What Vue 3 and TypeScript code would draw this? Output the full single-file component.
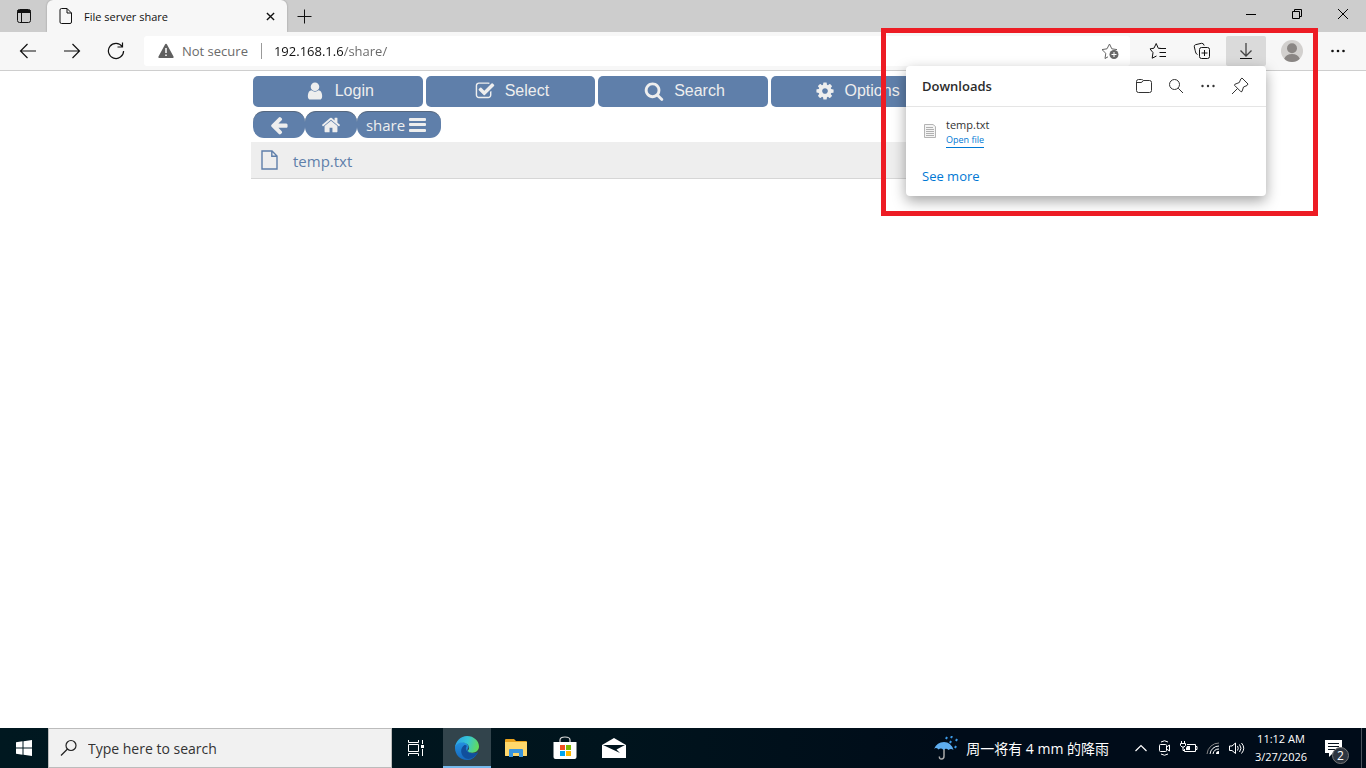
<script setup lang="ts">
import { ref } from 'vue'

const address = ref('192.168.1.6/share/')
const query = ref('')

const actions: { label: string; path: string }[] = [
  {
    label: 'Login',
    path: 'M1536 1399q0 109-62.5 187t-150.5 78h-854q-88 0-150.5-78t-62.5-187q0-85 8.5-160.5t31.5-152 58.5-131 94-89 134.5-34.5q131 128 313 128t313-128q76 0 134.5 34.5t94 89 58.5 131 31.5 152 8.5 160.5zm-256-887q0 159-112.5 271.5t-271.5 112.5-271.5-112.5-112.5-271.5 112.5-271.5 271.5-112.5 271.5 112.5 112.5 271.5z',
  },
  {
    label: 'Select',
    path: 'M1472 930v318q0 119-84.5 203.5t-203.5 84.5h-832q-119 0-203.5-84.5t-84.5-203.5v-832q0-119 84.5-203.5t203.5-84.5h832q63 0 117 25 15 7 18 23 3 17-9 29l-49 49q-10 10-23 10-3 0-9-2-23-6-45-6h-832q-66 0-113 47t-47 113v832q0 66 47 113t113 47h832q66 0 113-47t47-113v-254q0-13 9-22l64-64q10-10 23-10 6 0 12 3 20 8 20 29zm231-489l-814 814q-24 24-57 24t-57-24l-430-430q-24-24-24-57t24-57l110-110q24-24 57-24t57 24l263 263 647-647q24-24 57-24t57 24l110 110q24 24 24 57t-24 57z',
  },
  {
    label: 'Search',
    path: 'M1216 832q0-185-131.5-316.5t-316.5-131.5-316.5 131.5-131.5 316.5 131.5 316.5 316.5 131.5 316.5-131.5 131.5-316.5zm512 832q0 52-38 90t-90 38q-54 0-90-38l-343-342q-179 124-399 124-143 0-273.5-55.5t-225-150-150-225-55.5-273.5 55.5-273.5 150-225 225-150 273.5-55.5 273.5 55.5 225 150 150 225 55.5 273.5q0 220-124 399l343 343q37 37 37 90z',
  },
  {
    label: 'Options',
    path: 'M1152 896q0-106-75-181t-181-75-181 75-75 181 75 181 181 75 181-75 75-181zm512-109v222q0 12-8 23t-20 13l-185 28q-19 54-39 91 35 50 107 138 10 12 10 25t-9 23q-27 37-99 108t-94 71q-12 0-26-9l-138-108q-44 23-91 38-16 136-29 186-7 28-36 28h-222q-14 0-24.5-8.5t-11.5-21.5l-28-184q-49-16-90-37l-141 107q-10 9-25 9-14 0-25-11-126-114-165-168-7-10-7-23 0-12 8-23 15-21 51-66.5t54-70.5q-27-50-41-99l-183-27q-13-2-21-12.5t-8-23.5v-222q0-12 8-23t19-13l186-28q14-46 39-92-40-57-107-138-10-12-10-24 0-10 9-23 26-36 98.5-107.5t94.5-71.5q13 0 26 10l138 107q44-23 91-38 16-136 29-186 7-28 36-28h222q14 0 24.5 8.5t11.5 21.5l28 184q49 16 90 37l142-107q9-9 24-9 13 0 25 10 129 119 165 170 7 8 7 22 0 12-8 23-15 21-51 66.5t-54 70.5q26 50 41 98l183 28q13 2 21 12.5t8 23.5z',
  },
]
</script>

<template>
  <div class="desktop">
    <header class="titlebar">
      <button class="tab-actions" aria-label="Tab actions">
        <svg width="16" height="16" viewBox="0 0 16 16" fill="none" stroke="#111">
          <rect x="1.5" y="1.5" width="13" height="13" rx="2" />
          <path d="M1.5 2.5h13M1.5 3.5h13M1.5 4.5h13M5.5 5v9.5" />
        </svg>
      </button>
      <div class="tab">
        <svg width="14" height="16" viewBox="0 0 14 16" fill="none" stroke="#111">
          <path d="M2.5 .5H8L12.5 5V14a1.5 1.5 0 0 1-1.5 1.5H2.5A1.5 1.5 0 0 1 1 14V2A1.500 1.500 0 0 1 2.500 .5zM8 .5V5h4.500" />
        </svg>
        <span class="tab-title">File server share</span>
        <button class="tab-close" aria-label="Close tab">
          <svg width="9" height="9" viewBox="0 0 10 10" stroke="#111" stroke-width="1.500"><path d="M1 1l8 8M9 1L1 9" /></svg>
        </button>
      </div>
      <button class="new-tab" aria-label="New tab">
        <svg width="15" height="15" viewBox="0 0 15 15" stroke="#111"><path d="M7.500 .5v14M.5 7.500h14" /></svg>
      </button>
      <div class="window-controls">
        <button aria-label="Minimize">
          <svg width="10" height="10" viewBox="0 0 10 10" stroke="#000"><path d="M0 5.500h10" /></svg>
        </button>
        <button aria-label="Restore">
          <svg width="10" height="10" viewBox="0 0 10 10" fill="none" stroke="#000"><path d="M.5 2.500h7v7h-7zM2.500 2.500v-2h7v7h-2" /></svg>
        </button>
        <button aria-label="Close">
          <svg width="10" height="10" viewBox="0 0 10 10" stroke="#000"><path d="M0 0l10 10M10 0L0 10" /></svg>
        </button>
      </div>
    </header>

    <nav class="toolbar">
      <button class="tool" aria-label="Back">
        <svg width="18" height="16" viewBox="0 0 18 16" fill="none" stroke="#111" stroke-width="1.200"><path d="M17 8H1.500M8.500 1L1.500 8l7 7" /></svg>
      </button>
      <button class="tool" aria-label="Forward">
        <svg width="18" height="16" viewBox="0 0 18 16" fill="none" stroke="#111" stroke-width="1.200"><path d="M1 8h15.500M9.500 1l7 7-7 7" /></svg>
      </button>
      <button class="tool" aria-label="Refresh">
        <svg width="18" height="18" viewBox="0 0 18 18" fill="none" stroke="#111" stroke-width="1.200"><path d="M15.200 4.500A7.600 7.600 0 1 0 16.600 9M15.500 .5v4.500h-5" /></svg>
      </button>
      <div class="address">
        <svg width="16" height="16" viewBox="0 0 16 16"><path d="M8 .8q.7 0 1 .6l6.500 12q.6 1.600-.8 1.600H1.300q-1.400 0-.8-1.600l6.500-12q.3-.6 1-.6z" fill="#5f5f5f" /><path d="M8 5v5M8 11.500v1.500" stroke="#fff" stroke-width="1.500" /></svg>
        <span class="not-secure">Not secure</span>
        <span class="divider"></span>
        <input v-model="address" aria-label="Address" spellcheck="false" />
        <button class="add-favorite" aria-label="Add to favorites">
          <svg width="18" height="18" viewBox="0 0 18 18" fill="none" stroke="#666">
            <path d="M7 14.800L4 16.500l.8-5.200L1 7.600l5-.8L8.500 2l2.300 4.800 5.200.8" />
            <circle cx="13" cy="12.500" r="4.500" fill="#666" stroke="none" />
            <path d="M13 10v5M10.500 12.500h5" stroke="#fff" />
          </svg>
        </button>
      </div>
      <button class="tool" aria-label="Favorites">
        <svg width="18" height="18" viewBox="0 0 18 18" fill="none" stroke="#111" stroke-linejoin="round">
          <path d="M11.500 6.300H9.300L7.200 1.500 5 6.200l-4 .7 3 3.700-.8 5.600 4.300-2.200M10.500 6.500H17M10.500 10.500H17M10.500 14.500H17" />
        </svg>
      </button>
      <button class="tool" aria-label="Collections">
        <svg width="18" height="18" viewBox="0 0 18 18" fill="none" stroke="#111">
          <path d="M4.500 12.500C3 12 2.600 10.500 2.200 8.500L1.300 4.800Q1 3.200 2.500 2.700L8.500 1.300Q10.500 1 11.200 3.500" />
          <rect x="6.500" y="5.500" width="10" height="11" rx="2" />
          <path d="M11.500 8v6M8.500 11h6" />
        </svg>
      </button>
      <div class="downloads">
        <button class="tool active" aria-label="Downloads" aria-expanded="true">
          <svg width="14" height="16" viewBox="0 0 14 16" fill="none"><path d="M7 0v12.500M1.500 7.500L7 13l5.500-5.500" stroke="#444" stroke-width="1.300" /><path d="M1 15.500h12" stroke="#111" /></svg>
        </button>
        <section class="popup" aria-label="Downloads">
          <div class="popup-head">
            <h2>Downloads</h2>
            <button aria-label="Open downloads folder">
              <svg width="18" height="16" viewBox="0 0 18 16" fill="none" stroke="#333"><path d="M1.500 12.500v-9q0-2 2-2h3q1 0 2 1h6q2 0 2 2v8q0 2-2 2h-11q-2 0-2-2zM1.500 4.500h4.500q1 0 2.500-2" /></svg>
            </button>
            <button aria-label="Search downloads">
              <svg width="16" height="16" viewBox="0 0 16 16" fill="none" stroke="#333"><circle cx="6.500" cy="6.500" r="5" /><path d="M10.200 10.200L15 15" /></svg>
            </button>
            <button aria-label="More options">
              <svg width="16" height="16" viewBox="0 0 16 16" fill="#333"><circle cx="2.500" cy="8" r="1.200" /><circle cx="8" cy="8" r="1.200" /><circle cx="13.500" cy="8" r="1.200" /></svg>
            </button>
            <button aria-label="Pin downloads">
              <svg width="18" height="18" viewBox="0 0 18 18" fill="none" stroke="#333" stroke-linejoin="round"><path d="M11 1l6 6-1 1.500-3.500 1.500-1.500 4.500-1 .3L3.500 8.300l.3-1L8.300 5.500 9.800 2zM6.500 11.500L1 17" /></svg>
            </button>
          </div>
          <div class="download-item">
            <svg width="12" height="14" viewBox="0 0 12 14"><path d="M.5 .5H9l2.500 2v11H.5z" fill="#f4f4f4" stroke="#b4b4b4" /><path d="M2 3.500h7M2 5.500h8M2 7.500h8M2 9.500h8M2 11.500h8" stroke="#b0b0b0" /></svg>
            <div class="download-text">
              <span>temp.txt</span>
              <a href="#">Open file</a>
            </div>
          </div>
          <a class="see-more" href="#">See more</a>
        </section>
        <div class="highlight"></div>
      </div>
      <button class="tool profile" aria-label="Profile">
        <svg width="22" height="22" viewBox="0 0 22 22">
          <circle cx="11" cy="11" r="11" fill="#d2d0ce" />
          <circle cx="11" cy="8.200" r="5" fill="#8a8684" />
          <path d="M3.200 18.700Q5 14 11 14t7.800 4.700Q15.500 22 11 22t-7.800-3.300z" fill="#8a8684" />
        </svg>
      </button>
      <button class="tool settings" aria-label="Settings and more">
        <svg width="16" height="16" viewBox="0 0 16 16" fill="#111"><circle cx="2.500" cy="8" r="1.300" /><circle cx="8" cy="8" r="1.300" /><circle cx="13.500" cy="8" r="1.300" /></svg>
      </button>
    </nav>

    <main class="page">
      <div class="content">
        <div class="actions">
          <button v-for="a in actions" :key="a.label">
            <svg width="20" height="20" viewBox="0 0 1792 1792" fill="#eee"><path :d="a.path" /></svg>
            <span>{{ a.label }}</span>
          </button>
        </div>
        <div class="crumbs">
          <button aria-label="Parent folder">
            <svg width="20" height="20" viewBox="0 0 1792 1792" fill="#eee"><path d="M1664 896v128q0 53-32.500 90.500t-84.500 37.500h-704l293 294q38 36 38 90t-38 90l-75 76q-37 37-90 37-52 0-91-37l-651-652q-37-37-37-90 0-52 37-91l651-650q38-38 91-38 52 0 90 38l75 74q38 38 38 91t-38 91l-293 293h704q52 0 84.500 37.500t32.500 90.500z" /></svg>
          </button>
          <button aria-label="Home">
            <svg width="20" height="20" viewBox="0 0 1792 1792" fill="#eee"><path d="M1472 992v480q0 26-19 45t-45 19h-384v-384h-256v384h-384q-26 0-45-19t-19-45v-480q0-1 .5-3t.5-3l575-474 575 474q1 2 1 6zm223-69l-62 74q-8 9-21 11h-3q-13 0-21-7l-692-577-692 577q-12 8-24 7-13-2-21-11l-62-74q-8-10-7-23.500t11-21.500l719-599q32-26 76-26t76 26l244 204v-195q0-14 9-23t23-9h192q14 0 23 9t9 23v408l219 182q10 8 11 21.500t-7 23.500z" /></svg>
          </button>
          <button class="folder">
            <span>share</span>
            <svg width="17" height="14" viewBox="0 0 17 14" fill="#eee"><rect width="17" height="3" rx="1" /><rect y="5" width="17" height="3" rx="1" /><rect y="11" width="17" height="3" rx="1" /></svg>
          </button>
        </div>
        <div class="file-row">
          <svg width="17" height="20" viewBox="0 0 17 20" fill="none" stroke="#5f7faa" stroke-width="1.400"><path d="M1 1h10l5 5v13H1zM10.800 1v5.200H16" /></svg>
          <a href="#">temp.txt</a>
        </div>
      </div>
    </main>

    <footer class="taskbar">
      <button class="start" aria-label="Start">
        <svg width="16" height="16" viewBox="0 0 16 16" fill="#fff"><path d="M0 2.200L6.500 1.300V7.500H0zM7.500 1.200L16 0v7.500H7.500zM0 8.500h6.500v6.200L0 13.800zM7.500 8.500H16V16l-8.500-1.200z" /></svg>
      </button>
      <label class="search">
        <svg width="18" height="18" viewBox="0 0 18 18" fill="none" stroke="#222" stroke-width="1.200"><circle cx="11" cy="6.500" r="5" /><path d="M7.500 10L1 16.500" /></svg>
        <input v-model="query" placeholder="Type here to search" aria-label="Search" />
      </label>
      <button class="task-view" aria-label="Task View">
        <svg width="18" height="16" viewBox="0 0 18 16" fill="none" stroke="#fff"><path d="M1.500 0v2.500h10V0M1.500 4.500h10v7h-10zM1.500 16v-2.500h10V16M15.500 0v4M15.500 9v7" /><path d="M14 5h3v3h-3z" fill="#fff" stroke="none" /></svg>
      </button>
      <div class="apps">
        <button class="running" aria-label="Microsoft Edge">
          <svg width="24" height="24" viewBox="0 0 24 24">
            <defs>
              <linearGradient id="edge-top" x1="0" y1="0.3" x2="1" y2="0.5"><stop offset="0" stop-color="#2b9fe6" /><stop offset=".5" stop-color="#35c6d6" /><stop offset="1" stop-color="#63dc58" /></linearGradient>
              <linearGradient id="edge-side" x1="0" y1="0" x2="0" y2="1"><stop offset="0" stop-color="#2391e0" /><stop offset="1" stop-color="#1668bd" /></linearGradient>
            </defs>
            <path d="M0 12C0 7 4 5.500 7.500 6c4 .5 6.500 3.500 6 5.500-1.300 1.600-1.500 3-.2 4.200 2.500 2.200 6.700 2.300 9.400.7Q19 24 12 24C5 24 0 18.500 0 12z" fill="url(#edge-side)" />
            <path d="M9.500 9c-4 2.500-4.500 8-1 11.800 4.300 4.500 11 1.200 14-3.200.5-.9 0-1.200-.6-.9-3.200 1.300-7 .9-9.500-1.200-2-1.700-1.800-3.800-.6-5.500-.5-.9-1.300-1.200-2.300-1z" fill="#114f9c" />
            <path d="M0 12C.4 5 5.600 0 12 0c7 0 12 5 12 10.600 0 3.700-3 6.200-6.800 6.200-2.600 0-4.300-1-4.300-2 0-.8 1.200-1 1.200-3 0-3-3.200-5.300-6.700-5.300C3.600 6.500.5 8.500 0 12z" fill="url(#edge-top)" />
          </svg>
        </button>
        <button aria-label="File Explorer">
          <svg width="22" height="20" viewBox="0 0 22 20"><path d="M0 2q0-1 1-1h8l2 2h10q1 0 1 1v14H0z" fill="#e9a21c" /><path d="M0 4h22v13q0 1-1 1H1q-1 0-1-1z" fill="#ffd86b" /><path d="M4 19v-7q0-1 1-1h12q1 0 1 1v7h-4v-4H8v4z" fill="#3a95dc" /></svg>
        </button>
        <button aria-label="Microsoft Store">
          <svg width="24" height="24" viewBox="0 0 24 24"><path d="M7 7V4q0-3 5-3t5 3v3" fill="none" stroke="#ddd" stroke-width="1.200" /><path d="M.5 6h23v15q0 2-2 2h-19q-2 0-2-2z" fill="#fff" /><path d="M7 9h5v5H7z" fill="#f25022" /><path d="M13 9h5v5h-5z" fill="#7fba00" /><path d="M7 15h5v5H7z" fill="#00a4ef" /><path d="M13 15h5v5h-5z" fill="#ffb900" /></svg>
        </button>
        <button aria-label="Mail">
          <svg width="24" height="20" viewBox="0 0 24 20"><path d="M0 7L12 0l12 7v13H0z" fill="#fff" /><path d="M1 7h22l-8.500 4.500L18 15 1 7z" fill="#00151e" /></svg>
        </button>
      </div>
      <div class="tray">
        <button class="weather">
          <svg width="24" height="24" viewBox="0 0 24 24" fill="none">
            <path d="M10 8v12q0 3-2.500 3T5.500 20.500" stroke="#a9a9a9" stroke-width="1.500" />
            <path d="M0 13Q3 6 10 6t9.500 8Q17 12 14.500 14 12 11.500 9.500 14 7 11.500 4.500 13.500 2 11 0 13z" fill="#5eaef0" />
            <path d="M13 1l-1 2M18 0l-1 2M23 3l-1 2M17 5l-1 2M22 10l-1 2" stroke="#3c9be8" stroke-width="2" />
          </svg>
          <span>周一将有 4 mm 的降雨</span>
        </button>
        <div class="tray-icons">
          <button aria-label="Show hidden icons"><svg width="14" height="16" viewBox="0 0 14 16" fill="none" stroke="#fff" stroke-width="1.200"><path d="M1.500 11L7 5.500l5.500 5.500" /></svg></button>
          <button aria-label="Meet Now"><svg width="14" height="16" viewBox="0 0 14 16" fill="none" stroke="#fff"><rect x="1.500" y="4.500" width="7" height="7" rx="1" /><path d="M8.500 7l3-2v6l-3-2M3 2Q6.500-.5 10 2M3 14q3.500 2.500 7 0" /></svg></button>
          <button aria-label="Battery"><svg width="18" height="16" viewBox="0 0 18 16" fill="none" stroke="#fff"><path d="M7 4.500h8.500v7H4.500V9M15.500 6.500h1.500v3h-1.500M1.500 1v2M4.500 1v2M.5 3.500h5v2l-1.500 1.500H2L.5 5.500zM3 7v3.500h1.500" /><path d="M7 6h3v4H6V8z" fill="#fff" stroke="none" /></svg></button>
          <button aria-label="Network"><svg width="14" height="16" viewBox="0 0 14 16" fill="none"><path d="M1 14A12 12 0 0 1 13 3" stroke="#888" /><path d="M4 14A9 9 0 0 1 13 6M7 14a6 6 0 0 1 6-5" stroke="#fff" /><path d="M10 14a3 3 0 0 1 3-3v3z" fill="#fff" /></svg></button>
          <button aria-label="Volume"><svg width="18" height="16" viewBox="0 0 18 16" fill="none" stroke="#fff"><path d="M1.500 6H4l3.500-3v10.500L4 10.500H1.500zM9.500 6q1.500 2.200 0 4.500M11.500 4.500q3 3.700 0 7.500M13.500 3q4.500 5.200 0 10.500" /></svg></button>
        </div>
        <button class="clock"><span>11:12 AM</span><span>3/27/2026</span></button>
        <button class="notifications" aria-label="Notifications">
          <svg width="17" height="17" viewBox="0 0 17 17"><path d="M0 0h17v13H8l-4 4v-4H0z" fill="#fff" /><path d="M3 3.500h11M3 6.500h11M3 9.500h7" stroke="#04101c" /></svg>
          <span class="badge">2</span>
        </button>
      </div>
    </footer>
  </div>
</template>

<style>
html,
body {
  margin: 0;
  background: #fff;
}
</style>

<style scoped>
.desktop {
  display: flex;
  flex-direction: column;
  min-height: 100vh;
  overflow: hidden;
  font-family: 'Open Sans', 'Noto Sans', 'Noto Sans CJK SC', sans-serif;
  font-size: 13px;
  color: #111;
}
button {
  display: flex;
  align-items: center;
  justify-content: center;
  padding: 0;
  border: 0;
  background: none;
  color: inherit;
  font: inherit;
}
svg {
  flex: none;
}
a {
  text-decoration: none;
}
.titlebar {
  display: flex;
  height: 32px;
  background: #cdcdcd;
}
.tab-actions {
  width: 47px;
}
.tab {
  display: flex;
  align-items: center;
  flex: 0 1 240px;
  box-sizing: border-box;
  padding: 0 12px;
  border-radius: 6px 6px 0 0;
  background: #f7f7f7;
  box-shadow: 0 0 2px rgba(0, 0, 0, 0.3);
}
.tab-title {
  flex: 1;
  margin-left: 11px;
  font-size: 11px;
}
.new-tab {
  width: 34px;
}
.window-controls {
  display: flex;
  margin-left: auto;
}
.window-controls button {
  width: 46px;
  height: 28px;
}
.toolbar {
  position: relative;
  z-index: 1;
  display: flex;
  align-items: center;
  gap: 4px;
  height: 38px;
  padding: 0 8px;
  border-bottom: 1px solid #cecece;
  background: #f7f7f7;
}
.tool {
  flex: none;
  width: 40px;
  height: 30px;
  border-radius: 2px;
}
.active {
  background: #dadada;
}
.profile,
.settings {
  margin-left: 2px;
}
.address {
  display: flex;
  align-items: center;
  flex: 1;
  height: 30px;
  margin: 0 4px;
  padding: 0 11px 0 14px;
  border-radius: 3px;
  background: #fff;
}
.not-secure {
  margin-left: 8px;
  color: #6a6a6a;
}
.divider {
  width: 1px;
  height: 16px;
  margin: 0 12px 0 13px;
  background: #9a9a9a;
}
.address input {
  flex: 1;
  min-width: 0;
  padding: 0;
  border: 0;
  outline: 0;
  background: linear-gradient(90deg, #111 69px, #666 69px);
  background-clip: text;
  -webkit-background-clip: text;
  color: transparent;
  font: inherit;
}
.downloads {
  position: relative;
}
.popup {
  position: absolute;
  top: 30px;
  right: 0;
  width: 360px;
  height: 130px;
  border-radius: 4px;
  background: #fff;
  box-shadow: 0 5px 14px rgba(0, 0, 0, 0.36);
}
.popup-head {
  display: flex;
  align-items: center;
  height: 40px;
  padding: 0 10px 0 16px;
  border-bottom: 1px solid #e5e5e5;
}
.popup-head h2 {
  flex: 1;
  margin: 0;
  font-size: 13px;
  font-weight: 600;
  color: #2b2b2b;
}
.popup-head button {
  width: 32px;
  height: 32px;
}
.download-item {
  display: flex;
  gap: 10px;
  padding: 10px 16px 0 18px;
}
.download-item svg {
  margin-top: 7px;
}
.download-text {
  display: flex;
  flex-direction: column;
  align-items: flex-start;
  font-size: 11px;
  line-height: 15px;
  color: #333;
}
.download-text a {
  border-bottom: 1px solid #0078d4;
  color: #0078d4;
  font-size: 9px;
}
.see-more {
  display: block;
  margin: 18px 16px 0;
  color: #0078d4;
  line-height: 20px;
}
.highlight {
  position: absolute;
  top: -8px;
  right: -52px;
  box-sizing: border-box;
  width: 437px;
  height: 188px;
  border: 5px solid #ed1c24;
  pointer-events: none;
}
.page {
  flex: 1;
}
.content {
  max-width: 864px;
  margin: 0 auto;
}
.actions {
  display: grid;
  grid-template-columns: repeat(5, 1fr);
  gap: 3px;
  padding: 5px 2px 0;
}
.actions button {
  gap: 10px;
  height: 31px;
  padding: 0 0 2px 3px;
  border-radius: 5px;
  background: #5f7faa;
  color: #eee;
  font-family: 'Liberation Sans', Arial, sans-serif;
  font-size: 16px;
}
.crumbs {
  display: flex;
  margin: 4px 2px;
}
.crumbs button {
  width: 52px;
  height: 27px;
  border-top: 1px solid #55677f;
  border-radius: 11px;
  background: #5f7faa;
  color: #eee;
}
.crumbs .folder {
  gap: 4px;
  width: 84px;
  padding-right: 6px;
  font-size: 15px;
}
.file-row {
  display: flex;
  align-items: center;
  gap: 15px;
  height: 36px;
  padding: 0 10px;
  border-bottom: 1px solid #d6d6d6;
  background: #eee;
}
.file-row a {
  padding-top: 2px;
  color: #5f7faa;
  font-size: 15px;
}
.taskbar {
  display: flex;
  height: 40px;
  background: linear-gradient(90deg, #001820, #00141d 45%, #000c19 70%, #000c19);
  color: #fff;
}
.start {
  width: 48px;
}
.search {
  display: flex;
  align-items: center;
  flex: 0 1 344px;
  box-sizing: border-box;
  gap: 10px;
  padding: 0 11px;
  border: 1px solid #bcbcbc;
  background: #f1f1f1;
}
.search input {
  flex: 1;
  min-width: 0;
  padding: 0;
  border: 0;
  outline: 0;
  background: none;
  font: inherit;
  font-size: 14px;
}
.search input::placeholder {
  color: #333;
}
.task-view {
  width: 48px;
  margin-right: 3px;
}
.apps {
  display: flex;
  gap: 1px;
}
.apps button {
  width: 48px;
}
.apps .running {
  background: #32444c;
  box-shadow: inset 0 -2px #76b9ed;
}
.tray {
  display: flex;
  margin-left: auto;
}
.weather {
  gap: 8px;
  margin-right: 20px;
  font-size: 14px;
}
.tray-icons {
  display: flex;
}
.tray-icons button {
  width: 24px;
}
.clock {
  flex-direction: column;
  width: 64px;
  font-size: 11px;
  line-height: 18px;
}
.notifications {
  position: relative;
  box-sizing: border-box;
  width: 49px;
  margin-right: 4px;
  padding-right: 8px;
  border-right: 1px solid #4a535d;
}
.badge {
  position: absolute;
  right: 12px;
  bottom: 4px;
  width: 15px;
  height: 15px;
  border: 1px solid #777;
  border-radius: 50%;
  background: #2d3540;
  font-size: 12px;
  line-height: 15px;
}
</style>
